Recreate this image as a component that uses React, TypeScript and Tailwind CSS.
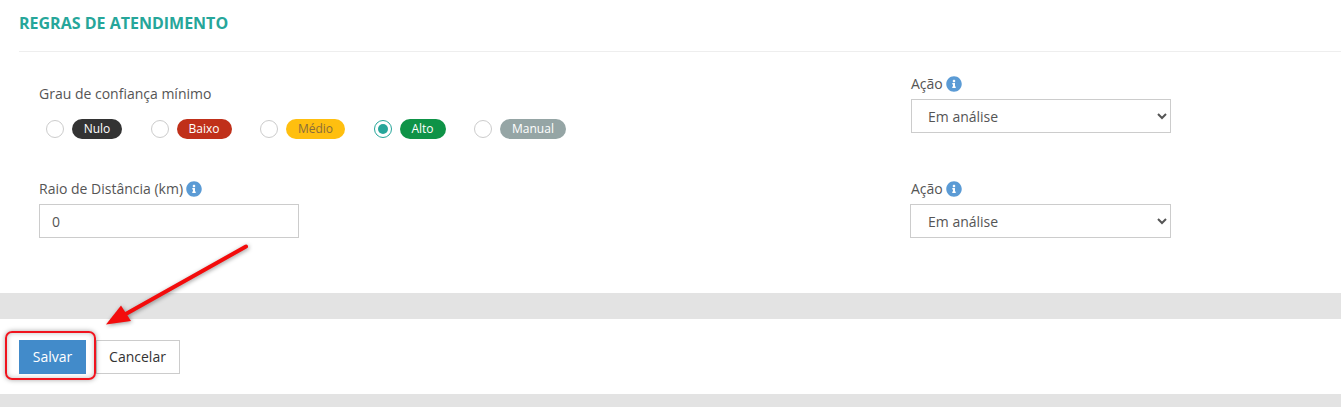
import { FaInfoCircle } from "react-icons/fa";

const levels = [
  { label: "Nulo", badge: "bg-[#333333] text-white w-[50px]" },
  { label: "Baixo", badge: "bg-[#c0301a] text-white w-[55px]" },
  { label: "Médio", badge: "bg-[#ffbf0f] text-[#8a6d3b] w-[59px]" },
  { label: "Alto", badge: "bg-[#0e9347] text-white w-[46px]", checked: true },
  { label: "Manual", badge: "bg-[#95a5a5] text-white w-[66px]" },
];

function Info() {
  return <FaInfoCircle className="text-[#5b9bd5] text-[16px]" />;
}

function FieldLabel({ text, info }: { text: string; info?: boolean }) {
  return (
    <div className="flex items-center gap-[3px] h-5 text-sm leading-5 text-[#555555]">
      <span>{text}</span>
      {info && <Info />}
    </div>
  );
}

function ActionSelect({ wide }: { wide?: boolean }) {
  return (
    <select
      defaultValue="analise"
      className={`block w-full h-[34px] ${wide ? "pl-[13px]" : "pl-[12px]"} pr-[6px] bg-white border border-[#cccccc] text-sm text-[#555555]`}
    >
      <option value="analise">Em análise</option>
      <option value="aprovado">Aprovado</option>
    </select>
  );
}

export default function App() {
  return (
    <div className="relative w-[1341px] h-[407px] overflow-hidden bg-[#e3e3e3] font-['Open_Sans',sans-serif]">
      {/* Rules */}
      <section className="h-[293px] bg-white pl-[19px]">
        <h2 className="h-[52px] pt-[12px] border-b border-[#eeeeee] text-base leading-[22px] font-bold text-[#26a69a]">
          REGRAS DE ATENDIMENTO
        </h2>

        <div className="pl-[20px] pt-[22px]">
          <div className="flex">
            <div className="w-[872px] pt-[10px]">
              <FieldLabel text="Grau de confiança mínimo" />
              <div className="flex mt-[15px] pl-[7px] gap-[28.5px]">
                {levels.map((level) => (
                  <label key={level.label} className="flex items-center gap-[8px] h-5">
                    {level.checked ? (
                      <span className="flex items-center justify-center w-[18px] h-[18px] rounded-full bg-white border border-[#26a69a]">
                        <span className="w-[10px] h-[10px] rounded-full bg-[#26a69a]" />
                      </span>
                    ) : (
                      <span className="w-[18px] h-[18px] rounded-full bg-white border border-[#cccccc]" />
                    )}
                    <span className={`flex items-center justify-center h-5 rounded-[10px] text-xs ${level.badge}`}>
                      {level.label}
                    </span>
                  </label>
                ))}
              </div>
            </div>
            <div className="w-[260px]">
              <FieldLabel text="Ação" info />
              <div className="mt-[5px]">
                <ActionSelect />
              </div>
            </div>
          </div>

          <div className="flex mt-[40px]">
            <div className="w-[871px]">
              <FieldLabel text="Raio de Distância (km)" info />
              <input
                readOnly
                value="0"
                className="block mt-[5px] w-[260px] h-[34px] px-[12px] border border-[#cccccc] text-sm text-[#555555]"
              />
            </div>
            <div className="w-[261px]">
              <div className="pl-px">
                <FieldLabel text="Ação" info />
              </div>
              <div className="mt-[5px]">
                <ActionSelect wide />
              </div>
            </div>
          </div>
        </div>
      </section>

      {/* Actions */}
      <div className="flex gap-[10px] h-[75px] mt-[26px] bg-white pl-[19px] pt-[21px]">
        <button className="w-[67px] h-[34px] bg-[#428bca] text-sm text-white">Salvar</button>
        <button className="w-[84px] h-[34px] pr-px bg-white border border-[#cccccc] text-sm text-[#333333]">Cancelar</button>
      </div>

      {/* Screenshot annotation */}
      <div className="absolute left-[5px] top-[331px] w-[91px] h-[49px] rounded-[7px] border-2 border-[#f0141e] shadow-[0_0_5px_rgba(0,0,0,0.35),inset_0_0_5px_rgba(0,0,0,0.25)]" />
      <svg className="absolute left-0 top-0 pointer-events-none drop-shadow-[1px_1px_2px_rgba(0,0,0,0.4)]" width="1341" height="407">
        <path d="M246 246.5 L124 315" stroke="#f30c0c" strokeWidth="4" strokeLinecap="round" />
        <polygon points="106,324.5 121,305.5 131,321" fill="#f30c0c" />
      </svg>
    </div>
  );
}
